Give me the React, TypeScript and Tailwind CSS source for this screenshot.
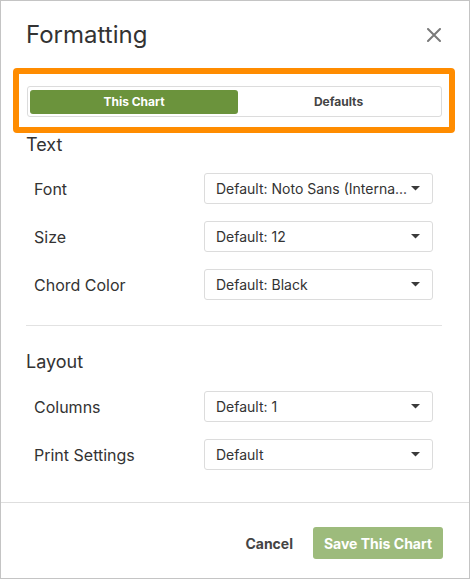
import React from "react";

function Caret() {
  return (
    <svg width="9" height="5" viewBox="0 0 9 5" className="shrink-0">
      <path d="M0 0 H9 L4.5 4.5 Z" fill="#3a3a3a" />
    </svg>
  );
}

function SelectRow({ label, value }: { label: string; value: string }) {
  return (
    <div className="flex items-center pl-[8px] pr-[9px]">
      <div className="flex-1 text-[16px] text-[#333]">{label}</div>
      <div className="w-[229px] h-[31px] border border-[#dcdcdc] rounded-[3px] flex items-center justify-between pl-[11px] pr-[12px] bg-white">
        <span className="text-[14px] text-[#333] whitespace-nowrap overflow-hidden">{value}</span>
        <Caret />
      </div>
    </div>
  );
}

export default function App() {
  return (
    <div
      className="w-[470px] h-[579px] border border-[#c4c4c4] bg-white flex flex-col"
      style={{ fontFamily: "Inter, 'Noto Sans', sans-serif" }}
    >
      <div className="flex items-center justify-between pl-[25px] pr-[28px] mt-[18px] h-[32px]">
        <h1 className="text-[24px] leading-[32px] text-[#333] font-normal">Formatting</h1>
        <svg width="14" height="14" viewBox="0 0 14 14">
          <path d="M1 1 L13 13 M13 1 L1 13" stroke="#7a7a7a" strokeWidth="2" strokeLinecap="round" />
        </svg>
      </div>

      <div className="mt-[17px] ml-[12px] w-[442px] h-[65px] border-[6px] border-[#ff8c00] rounded-[4px] pl-[8px] pt-[12px]">
        <div className="w-[415px] h-[31px] border border-[#dcdcdc] rounded-[3px] flex items-center px-[2px]">
          <div className="w-[208px] h-[24px] bg-[#6b933c] rounded-[3px] flex items-center justify-center text-[12px] leading-[24px] font-bold text-white">
            This Chart
          </div>
          <div className="flex-1 flex items-center justify-center text-[12px] font-bold text-[#444]">
            Defaults
          </div>
        </div>
      </div>

      <div className="pl-[25px] pr-[27px] flex flex-col">
        <div className="text-[18px] leading-[24px] text-[#333] h-[24px]">Text</div>
        <div className="flex flex-col gap-[17px] mt-[16px]">
          <SelectRow label="Font" value="Default: Noto Sans (Interna..." />
          <SelectRow label="Size" value="Default: 12" />
          <SelectRow label="Chord Color" value="Default: Black" />
        </div>
        <div className="h-px bg-[#e2e2e2] mt-[25px]" />
        <div className="text-[18px] leading-[24px] text-[#333] mt-[24px] h-[24px]">Layout</div>
        <div className="flex flex-col gap-[17px] mt-[17px]">
          <SelectRow label="Columns" value="Default: 1" />
          <SelectRow label="Print Settings" value="Default" />
        </div>
      </div>

      <div className="h-px bg-[#dedede] mt-[32px]" />
      <div className="flex items-center justify-end gap-[20px] pr-[26px] pt-[24px]">
        <span className="text-[14px] font-bold text-[#444]">Cancel</span>
        <div className="w-[130px] h-[32px] rounded-[3px] bg-[#9dbb7c] flex items-center justify-center text-[14px] font-bold text-white">
          Save This Chart
        </div>
      </div>
    </div>
  );
}
